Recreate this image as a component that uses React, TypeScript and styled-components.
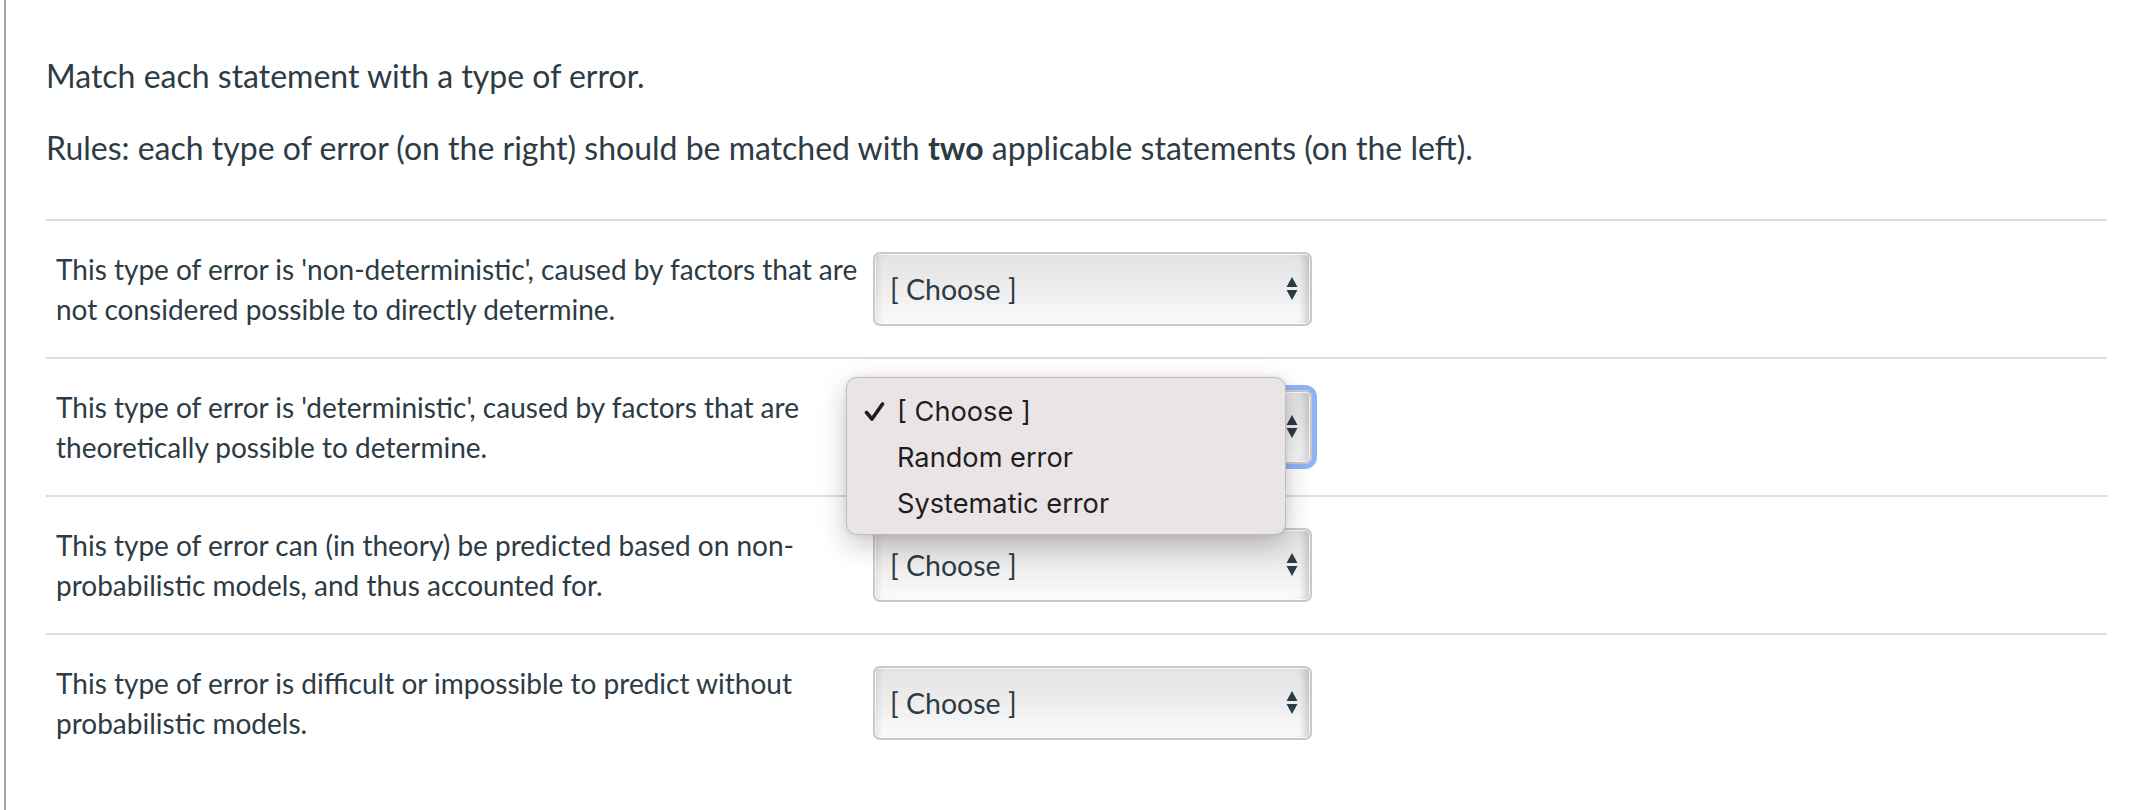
import styled, { createGlobalStyle } from "styled-components";

const GlobalStyle = createGlobalStyle`
  html, body {
    margin: 0;
    padding: 0;
    background: #ffffff;
  }
  body {
    font-family: Lato, "Noto Sans", sans-serif;
    color: #2d3b45;
  }
`;

const Frame = styled.div`
  margin-left: 4px;
  border-left: 2px solid #a4a4a4;
  height: 810px;
  box-sizing: border-box;
  padding: 56px 33px 0 40px;
  overflow: hidden;
`;

const Header = styled.div`
  display: flex;
  flex-direction: column;
  gap: 32px;
`;

const Prompt = styled.p`
  margin: 0;
  font-size: 32px;
  line-height: 40px;
`;

const Strong = styled.strong`
  font-weight: 700;
`;

const Answers = styled.div`
  margin-top: 51px;
`;

const Row = styled.div`
  display: flex;
  align-items: center;
  border-top: 2px solid #dddddd;
  padding: 28px 0 28px 10px;
  min-height: 80px;
`;

const Statement = styled.div`
  flex: 0 0 812px;
  margin-right: 5px;
  font-size: 28px;
  line-height: 40px;
`;

const SelectWrap = styled.div`
  position: relative;
`;

const SelectBox = styled.div<{ $focused?: boolean }>`
  width: 439px;
  height: 74px;
  box-sizing: border-box;
  display: flex;
  align-items: center;
  justify-content: space-between;
  padding: 0 12px 0 15px;
  border: 2px solid #c9c9c9;
  border-radius: 7px;
  background: linear-gradient(#e3e3e3 0%, #ececec 45%, #fbfbfb 100%);
  box-shadow: inset 0 0 0 1px rgba(255, 255, 255, 0.8),
    inset 7px 0 7px -5px rgba(0, 0, 0, 0.12),
    inset -9px 0 8px -5px rgba(0, 0, 0, 0.2);
  font-size: 28.5px;
  color: #2d3b45;
  outline: ${(p) => (p.$focused ? "5px solid #8fb3f6" : "none")};
  outline-offset: 0;
`;

const Arrows = styled.svg`
  width: 12px;
  height: 26px;
  flex: none;
`;

const Menu = styled.div`
  position: absolute;
  left: -27px;
  top: -13px;
  width: 440px;
  height: 158px;
  box-sizing: border-box;
  padding: 11px 0 0 50px;
  background: #ebe4e7;
  border: 1px solid #c2bcbf;
  border-radius: 11px;
  box-shadow: 0 10px 28px rgba(0, 0, 0, 0.22), 0 0 6px rgba(0, 0, 0, 0.08);
  font-family: Inter, "Noto Sans", sans-serif;
  font-size: 27.2px;
  color: #1e1e1e;
  z-index: 2;
`;

const Option = styled.div`
  position: relative;
  line-height: 46px;
  height: 46px;
  white-space: nowrap;
`;

const Check = styled.svg`
  position: absolute;
  left: -33px;
  top: 12px;
  width: 21px;
  height: 21px;
`;

const SelectArrows = () => (
  <Arrows viewBox="0 0 12 26">
    <path d="M6 1 L11.5 11 L0.5 11 Z" fill="#2d3b45" />
    <path d="M0.5 14 L11.5 14 L6 24 Z" fill="#2d3b45" />
  </Arrows>
);

const Select = ({ focused, open }: { focused?: boolean; open?: boolean }) => (
  <SelectWrap>
    <SelectBox $focused={focused}>
      <span>[ Choose ]</span>
      <SelectArrows />
    </SelectBox>
    {open && (
      <Menu>
        <Option>
          <Check viewBox="0 0 21 21">
            <path
              d="M2.5 11.5 L8 18 L18.5 3"
              fill="none"
              stroke="#1e1e1e"
              strokeWidth="3.6"
              strokeLinecap="round"
              strokeLinejoin="round"
            />
          </Check>
          [ Choose ]
        </Option>
        <Option>Random error</Option>
        <Option>Systematic error</Option>
      </Menu>
    )}
  </SelectWrap>
);

const statements = [
  "This type of error is 'non-deterministic', caused by factors that are not considered possible to directly determine.",
  "This type of error is 'deterministic', caused by factors that are theoretically possible to determine.",
  "This type of error can (in theory) be predicted based on non-probabilistic models, and thus accounted for.",
  "This type of error is difficult or impossible to predict without probabilistic models.",
];

export default function App() {
  return (
    <>
      <GlobalStyle />
      <Frame>
        <Header>
          <Prompt>Match each statement with a type of error.</Prompt>
          <Prompt>
            Rules: each type of error (on the right) should be matched with{" "}
            <Strong>two</Strong> applicable statements (on the left).
          </Prompt>
        </Header>
        <Answers>
          {statements.map((text, i) => (
            <Row key={i}>
              <Statement>{text}</Statement>
              <Select focused={i === 1} open={i === 1} />
            </Row>
          ))}
        </Answers>
      </Frame>
    </>
  );
}
